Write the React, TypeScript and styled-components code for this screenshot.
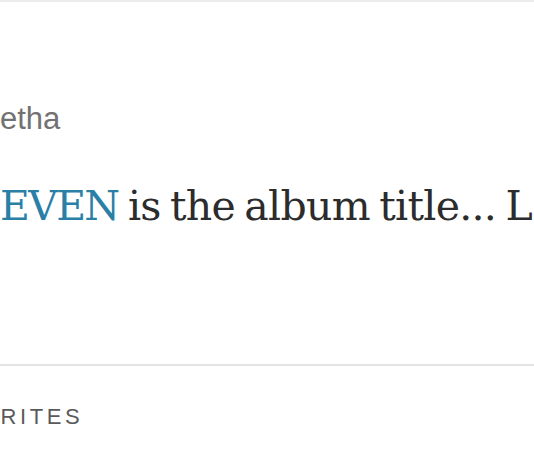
import React from "react";
import styled, { createGlobalStyle } from "styled-components";

const Global = createGlobalStyle`
  html, body {
    margin: 0;
    padding: 0;
    background: #ffffff;
    overflow: hidden;
  }
`;

const Page = styled.div`
  width: 534px;
  height: 462px;
  overflow: hidden;
  background: #ffffff;
  border-top: 2px solid #ececec;
  box-sizing: border-box;
  display: flex;
  flex-direction: column;
`;

const Username = styled.div`
  margin-top: 101px;
  font-family: "Liberation Sans", Arial, sans-serif;
  font-size: 31px;
  line-height: 32px;
  color: #727272;
  white-space: nowrap;
`;

const TweetText = styled.p`
  margin: 48px 0 0;
  font-family: "DejaVu Serif", Georgia, serif;
  font-size: 41px;
  line-height: 46px;
  letter-spacing: -0.7px;
  word-spacing: -3px;
  color: #2c2c2c;
  white-space: nowrap;
  overflow: hidden;
`;

const Hashtag = styled.span`
  color: #2a7fa6;
  letter-spacing: -1.7px;
`;

const Divider = styled.hr`
  margin: 135px 0 0;
  border: 0;
  height: 2px;
  background: #e4e4e4;
`;

const StatLabel = styled.div`
  margin: 40px 0 0 -71px;
  font-family: "Liberation Sans", Arial, sans-serif;
  font-size: 22px;
  line-height: 21px;
  letter-spacing: 3.6px;
  text-transform: uppercase;
  color: #5a5a5a;
  white-space: nowrap;
`;

export default function App() {
  return (
    <>
      <Global />
      <Page>
        <Username>etha</Username>
        <TweetText>
          <Hashtag>EVEN</Hashtag> is the album title... L
        </TweetText>
        <Divider />
        <StatLabel>Favorites</StatLabel>
      </Page>
    </>
  );
}
